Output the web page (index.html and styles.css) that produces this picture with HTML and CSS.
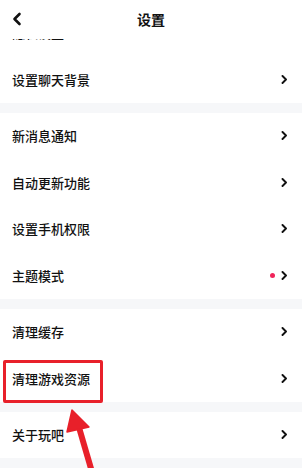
FILE: index.html
```html
<!DOCTYPE html>
<html lang="zh-CN">
<head>
<meta charset="utf-8">
<title>设置</title>
<link rel="stylesheet" href="styles.css">
</head>
<body>
<div class="page">
  <header class="header">
    <svg class="back" width="12" height="14" viewBox="0 0 12 14"><path d="M8.5 2 L3.5 7 L8.5 12" fill="none" stroke="#111" stroke-width="2.6" stroke-linecap="round" stroke-linejoin="round"/></svg>
    <h1 class="title">设置</h1>
  </header>
  <main class="list">
    <section class="group first">
      <div class="row"><span class="label">隐私设置</span><span class="chev"></span></div>
      <div class="row"><span class="label">设置聊天背景</span><span class="chev"></span></div>
    </section>
    <section class="group">
      <div class="row"><span class="label">新消息通知</span><span class="chev"></span></div>
      <div class="row"><span class="label">自动更新功能</span><span class="chev"></span></div>
      <div class="row"><span class="label">设置手机权限</span><span class="chev"></span></div>
      <div class="row"><span class="label">主题模式</span><span class="right"><span class="dot"></span><span class="chev"></span></span></div>
    </section>
    <section class="group">
      <div class="row"><span class="label">清理缓存</span><span class="chev"></span></div>
      <div class="row"><span class="label highlight">清理游戏资源</span><span class="chev"></span></div>
    </section>
    <section class="group">
      <div class="row"><span class="label">关于玩吧</span><span class="chev"></span></div>
    </section>
  </main>
  <svg class="arrow" width="302" height="468" viewBox="0 0 302 468">
    <line x1="78" y1="424" x2="92" y2="472" stroke="#e8202a" stroke-width="6"/>
    <polygon points="72,410 67,432 89,427" fill="#e8202a" stroke="#e8202a" stroke-width="1.5" stroke-linejoin="round"/>
  </svg>
</div>
</body>
</html>
```
FILE: styles.css
```css
* { box-sizing: border-box; }
html, body { margin: 0; padding: 0; }
body {
  width: 302px;
  height: 468px;
  overflow: hidden;
  background: #ffffff;
  font-family: "Noto Sans CJK SC", "Noto Sans", sans-serif;
  color: #111;
}
.page {
  position: relative;
  width: 302px;
  height: 468px;
  overflow: hidden;
  display: flex;
  flex-direction: column;
}
.header {
  position: relative;
  z-index: 2;
  height: 38.5px;
  flex: none;
  background: #fff;
  display: flex;
  align-items: center;
  justify-content: center;
  padding-bottom: 1.5px;
}
.back {
  position: absolute;
  left: 11px;
  top: 12px;
}
.title {
  margin: 0;
  font-size: 14px;
  font-weight: 700;
  line-height: 1;
}
.list {
  flex: 1;
  background: #f6f7f9;
  display: flex;
  flex-direction: column;
  gap: 10px;
}
.group {
  background: #fff;
  display: flex;
  flex-direction: column;
}
.group.first { margin-top: -29px; }
.row {
  height: 46.5px;
  display: flex;
  align-items: center;
  justify-content: space-between;
  padding: 0 14px 0 12px;
}
.label {
  font-size: 13px;
  font-weight: 500;
  line-height: 1;
}
.highlight {
  position: relative;
}
.highlight::after {
  content: "";
  position: absolute;
  left: -9px;
  top: -11.5px;
  width: 94px;
  height: 37px;
  border: 3px solid #e8202a;
  border-radius: 2px;
}
.right {
  display: flex;
  align-items: center;
  gap: 6px;
}
.dot {
  width: 5px;
  height: 5px;
  border-radius: 50%;
  background: #f0245a;
}
.chev {
  width: 7px;
  height: 9px;
  background: no-repeat center / 7px 9px url("data:image/svg+xml,%3Csvg xmlns='http://www.w3.org/2000/svg' width='7' height='9' viewBox='0 0 7 9'%3E%3Cpath d='M1.5 1 L5 4.5 L1.5 8' fill='none' stroke='%23111' stroke-width='1.9' stroke-linecap='round' stroke-linejoin='round'/%3E%3C/svg%3E");
}
.arrow {
  position: absolute;
  left: 0;
  top: 0;
  pointer-events: none;
  z-index: 3;
}
```
